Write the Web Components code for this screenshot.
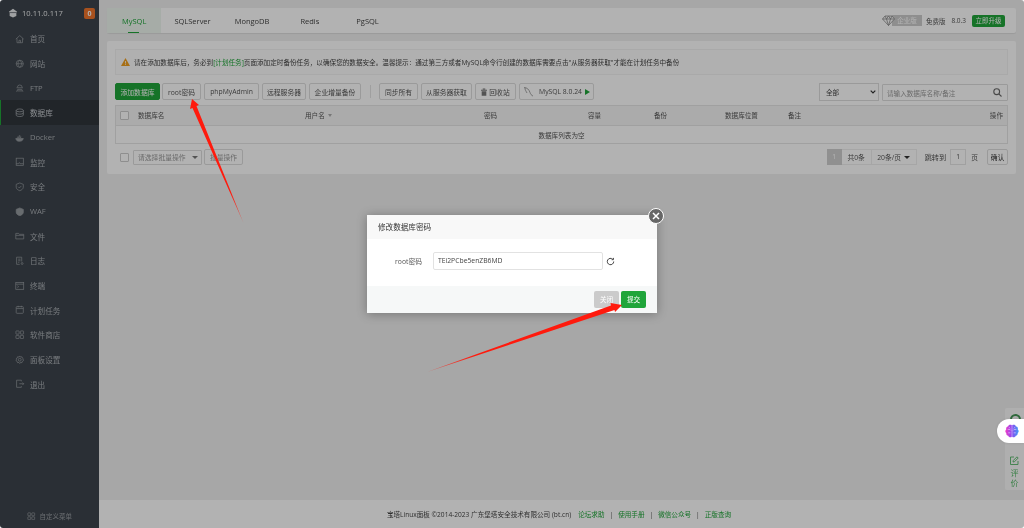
<!DOCTYPE html>
<html lang="zh">
<head>
<meta charset="utf-8">
<title>数据库</title>
<style>
  html, body { margin: 0; padding: 0; width: 1024px; height: 528px; overflow: hidden; background: #fff; }
  body { font-family: "Open Sans", "Noto Sans CJK SC", sans-serif; font-size: 6.6px; color: #555; }
</style>
</head>
<body>
<bt-app></bt-app>
<script>
const FONT = `"Open Sans", "Noto Sans CJK SC", sans-serif`;

const ICONS = {
  home: '<path d="M1 6.500 6 2l5 4.500M2.500 5.500V11h7V5.500M5 11V8h2v3"/>',
  globe: '<circle cx="6" cy="6" r="4.500"/><path d="M1.500 6h9M6 1.500c-3 3-3 6 0 9M6 1.500c3 3 3 6 0 9"/>',
  ftp: '<path d="M3 5.500a3 3 0 0 1 6 0M2 6h8M3.500 8h5M2 11l1.500-3M10 11 8.500 8M3 10h6"/>',
  db: '<ellipse cx="6" cy="3" rx="4.500" ry="1.800"/><path d="M1.500 3v6c0 1 2 1.800 4.500 1.800S10.500 10 10.500 9V3M1.500 6c0 1 2 1.800 4.500 1.800S10.500 7 10.500 6"/>',
  docker: '<path d="M1 7h9.500c-.5 2.500-2.500 3.500-5 3.500C3 10.500 1.500 9.500 1 7z" fill="currentColor"/><path d="M3 6V5h1.500v1M5 6V5h1.500v1M5 4.500V3.500h1.500v1M7 6V5h1" fill="none"/>',
  monitor: '<rect x="1.500" y="1.500" width="9" height="9"/><path d="M1.500 8.500h3l1-1.500 1 1.500h4"/>',
  shield: '<path d="M6 1.200 10.500 3v3.500c0 2-2 3.700-4.500 4.500-2.500-.8-4.500-2.500-4.500-4.500V3z"/><path d="m4 6 1.500 1.500L8 5"/>',
  waf: '<path d="M6 1.200 10.500 3v3.500c0 2-2 3.700-4.500 4.500-2.500-.8-4.500-2.500-4.500-4.500V3z" fill="currentColor"/>',
  folder: '<path d="M1 3h3.500l1 1.200H11V10H1zM1 5.500h10"/>',
  log: '<path d="M8.500 7V1.500h-6.500v9H6M4 4h3M4 6h3M4 8h1.500"/><circle cx="9" cy="9.500" r="1.200"/>',
  term: '<rect x="1" y="2" width="10" height="8.500"/><path d="M1 4h10M3 6l1.500 1.200L3 8.500"/>',
  cron: '<rect x="1.500" y="2" width="9" height="8.500" rx="1"/><path d="M1.500 4.500h9M4 1v2M8 1v2"/>',
  store: '<rect x="1.200" y="1.200" width="4" height="4" rx=".5"/><rect x="6.800" y="1.200" width="4" height="4" rx=".5"/><rect x="1.200" y="6.800" width="4" height="4" rx=".5"/><rect x="6.800" y="6.800" width="4" height="4" rx=".5"/>',
  gear: '<circle cx="6" cy="6" r="1.800"/><path d="M6 1.200 7 2.600l1.800-.3.500 1.700 1.500 1L10 6l.8 1-1.500 1-.5 1.700L7 9.400 6 10.800 5 9.400l-1.800.3L2.700 8l-1.500-1L2 6l-.8-1 1.500-1 .5-1.700L5 2.600z"/>',
  exit: '<path d="M8 3V1.500H2v9h6V9M5.500 6H11M9.500 4.500 11 6 9.500 7.500"/>'
};

function comp(tag, build) {
  customElements.define(tag, class extends HTMLElement {
    connectedCallback() {
      if (this.shadowRoot) return;
      this.attachShadow({ mode: 'open' });
      this.shadowRoot.innerHTML = build(this);
    }
  });
}

comp('bt-nav-item', el => `
  <style>
    :host { display: flex; align-items: center; height: 24.67px; padding-left: 15px; gap: 5.500px; color: #acb1b6; font-size: 7.600px; box-sizing: border-box; }
    :host([active]) { background: #30363c; box-shadow: inset 1px 0 #20a53a; color: #c8ccd0; }
    svg { width: 9.500px; height: 9.500px; fill: none; stroke: currentColor; stroke-width: .9; flex: none; opacity: .8; }
  </style>
  <svg viewBox="0 0 12 12">${ICONS[el.getAttribute('icon')]}</svg><slot></slot>`);

comp('bt-sidebar', () => `
  <style>
    :host { display: flex; flex-direction: column; width: 99px; flex: none; background: #3d444c; font-family: ${FONT}; }
    .head { display: flex; align-items: center; height: 26.500px; padding: 0 4px 0 8px; color: #e8eaec; font-size: 7.600px; box-sizing: border-box; }
    .head svg { width: 10px; height: 10px; margin-right: 4px; }
    .head span { flex: 1; }
    .badge { flex: none; width: 11px; height: 11px; background: #f0752c; color: #fff; border-radius: 2px; font-size: 7px; font-weight: 700; line-height: 11px; text-align: center; }
    .foot { margin-top: auto; height: 24px; display: flex; align-items: center; padding-left: 27px; gap: 4px; color: #9a9fa4; font-size: 6.500px; }
    .foot svg { width: 8.500px; height: 8.500px; fill: none; stroke: currentColor; stroke-width: .9; }
  </style>
  <div class="head">
    <svg viewBox="0 0 12 12"><path d="M1 4.500 6 1l5 3.500-1 .8v4.200L6 11.500 2 9.500V5.300z" fill="#e6e8ea"/><path d="M2 5.500h8" stroke="#3d444c" stroke-width=".8"/></svg>
    <span>10.11.0.117</span><b class="badge">0</b>
  </div>
  <nav><slot></slot></nav>
  <div class="foot"><svg viewBox="0 0 12 12">${ICONS.store}</svg>自定义菜单</div>`);

comp('bt-tabs', () => `
  <style>
    :host { display: flex; align-items: center; height: 25px; background: #fff; border-radius: 2px; box-shadow: 0 1px 1px rgba(0,0,0,.08); font-family: ${FONT}; font-size: 7.500px; color: #444; flex: none; }
    .t { height: 100%; display: flex; align-items: center; padding: 0 15px; position: relative; }
    .on { background: #eef7f0; color: #20a53a; }
    .on::after { content: ""; position: absolute; left: 21px; width: 11px; bottom: 0; height: 1px; background: #20a53a; }
    .tabs { display: flex; height: 100%; }
    .right { margin-left: auto; display: flex; align-items: center; font-size: 6.500px; color: #555; padding-right: 11px; }
    .ver { display: flex; align-items: center; margin-right: 4px; }
    .ver svg { width: 13px; height: 11px; margin-right: -3px; position: relative; }
    .ver b { background: #ccc; color: #fff; font-weight: 400; height: 11px; width: 30px; text-align: center; line-height: 11px; font-size: 6.500px; }
    .num { margin: 0 6px; }
    .up { background: #20a53a; color: #fff; border-radius: 2px; width: 33px; height: 12px; line-height: 12px; text-align: center; }
  </style>
  <div class="tabs">
    <div class="t on">MySQL</div><div class="t" style="padding:0 13px">SQLServer</div><div class="t" style="padding:0 11px">MongoDB</div><div class="t" style="padding:0 20px">Redis</div><div class="t" style="padding:0 17px">PgSQL</div>
  </div>
  <div class="right">
    <div class="ver"><svg viewBox="0 0 13 11" fill="#fff" stroke="#888" stroke-width=".8"><path d="M3 1h7l2.500 3L6.500 10.500.5 4zM.5 4h12M4.500 4l2 6.500 2-6.500M3 1l1.500 3L6.500 1l2 3L10 1"/></svg><b>企业版</b></div>
    <span>免费版</span><span class="num">8.0.3</span><span class="up">立即升级</span>
  </div>`);

comp('bt-btn', () => `
  <style>
    :host { display: inline-flex; align-items: center; justify-content: center; box-sizing: border-box; height: 17px; border: 1px solid #ddd; border-radius: 2px; background: #fff; color: #555; font-size: 6.800px; white-space: nowrap; flex: none; gap: 2px; }
    :host([primary]) { background: #20a53a; border-color: #20a53a; color: #fff; }
  </style><slot></slot>`);

comp('bt-check', () => `
  <style>:host { display: block; width: 9px; height: 9px; box-sizing: border-box; border: 1px solid #ccc; background: #fff; border-radius: 1px; flex: none; }</style>`);

comp('bt-toolbar', () => `
  <style>
    :host { display: flex; align-items: flex-start; height: 18px; margin-top: 8px; }
    .sep { width: 1px; height: 13px; background: #e4e4e4; margin: 2px 8px 0 9px; flex: none; }
    .sel { width: 60px; height: 18px; margin-left: auto; box-sizing: border-box; border: 1px solid #ddd; display: flex; align-items: center; justify-content: space-between; padding: 0 2px 0 6px; color: #444; font-size: 6.600px; }
    .search { width: 126px; height: 17px; margin: 1px 0 0 3px; box-sizing: border-box; border: 1px solid #ddd; border-radius: 1px; display: flex; align-items: center; justify-content: space-between; padding: 0 5px 0 4px; color: #999; font-size: 6.600px; }
    svg { display: block; }
    .ic { fill: none; stroke: #666; }
  </style>
  <bt-btn primary style="width:45px">添加数据库</bt-btn>
  <bt-btn style="width:39px;margin-left:2px">root密码</bt-btn>
  <bt-btn style="width:55px;margin-left:3px">phpMyAdmin</bt-btn>
  <bt-btn style="width:44px;margin-left:3px">远程服务器</bt-btn>
  <bt-btn style="width:52px;margin-left:3px">企业增量备份</bt-btn>
  <div class="sep"></div>
  <bt-btn style="width:39px">同步所有</bt-btn>
  <bt-btn style="width:51px;margin-left:3px">从服务器获取</bt-btn>
  <bt-btn style="width:41px;margin-left:3px"><svg width="6" height="8" viewBox="0 0 7 9"><path d="M0 2h7v1H0zM2 .5h3v1H2zM.8 3.500h5.400V9H.8z" fill="#777"/></svg> 回收站</bt-btn>
  <bt-btn style="width:75px;margin-left:3px"><svg class="ic" width="11" height="11" viewBox="0 0 11 11" stroke-width=".6"><path d="M1 1.500c3 0 5 2 6 5 .5 1.500 1.500 3 3 3.500M2 2c0 2 1 3 2 5"/></svg><span style="margin:0 1px 0 3px">MySQL 8.0.24</span><svg width="5" height="6" viewBox="0 0 5 6"><path d="M0 0l5 3-5 3z" fill="#20a53a"/></svg></bt-btn>
  <div class="sel">全部<svg width="6" height="4" viewBox="0 0 6 4"><path d="m.7.7 2.300 2.300L5.300.7" fill="none" stroke="#333" stroke-width="1.200"/></svg></div>
  <div class="search">请输入数据库名称/备注<svg class="ic" width="9" height="9" viewBox="0 0 9 9" stroke-width="1.100"><circle cx="3.700" cy="3.700" r="2.900"/><path d="m5.800 5.800 2.700 2.700"/></svg></div>`);

comp('bt-table', () => `
  <style>
    :host { display: block; margin-top: 4px; border: 1px solid #e6e6e6; box-sizing: border-box; height: 39px; font-size: 6.600px; color: #555; }
    .h { display: grid; grid-template-columns: 22px 167px 179px 104px 66px 71px 63px 1fr auto; align-items: center; height: 19px; background: #f5f5f5; border-bottom: 1px solid #e6e6e6; padding-right: 4px; }
    .h span { position: relative; top: -.5px; }
    .h bt-check { margin-left: 4px; }
    .e { height: 17px; display: flex; align-items: center; justify-content: center; }
    .u { display: flex; align-items: center; gap: 3px; }
    .u::after { content: ""; border: 2.500px solid transparent; border-top: 3px solid #aaa; border-bottom: 0; }
  </style>
  <div class="h"><bt-check></bt-check><span>数据库名</span><span class="u">用户名</span><span>密码</span><span>容量</span><span>备份</span><span>数据库位置</span><span>备注</span><span>操作</span></div>
  <div class="e">数据库列表为空</div>`);

comp('bt-pager', () => `
  <style>
    :host { display: flex; align-items: center; height: 16px; margin-top: 5px; font-size: 6.800px; color: #555; }
    .sel { display: flex; align-items: center; box-sizing: border-box; height: 15px; border: 1px solid #ddd; border-radius: 1px; color: #999; width: 69px; margin-left: 4px; padding: 0 3px 0 4px; justify-content: space-between; }
    .tri { width: 0; height: 0; border: 3px solid transparent; border-top: 3.500px solid #777; border-bottom: 0; }
    .pg { margin-left: auto; display: flex; align-items: center; height: 16px; }
    .cur { width: 15px; height: 16px; line-height: 16px; text-align: center; background: #cfcfcf; color: #fff; }
    .cell { display: flex; align-items: center; justify-content: center; box-sizing: border-box; height: 16px; border: 1px solid #eee; border-left: 0; }
    .inp { width: 16px; height: 16px; line-height: 14px; box-sizing: border-box; border: 1px solid #e6e6e6; text-align: center; margin: 0 5px 0 4px; }
  </style>
  <bt-check style="margin-left:5px"></bt-check>
  <div class="sel">请选择批量操作<i class="tri"></i></div>
  <bt-btn style="width:39px;height:16px;margin-left:2px;color:#999">批量操作</bt-btn>
  <div class="pg">
    <div class="cur">1</div>
    <div class="cell" style="width:30px">共0条</div>
    <div class="cell" style="width:45px;gap:3px">20条/页<i class="tri" style="border-top-color:#333"></i></div>
    <span style="margin-left:8px;font-size:7.200px">跳转到</span>
    <div class="inp">1</div>
    <span>页</span>
    <bt-btn style="width:21px;height:16px;margin-left:9px;color:#333">确认</bt-btn>
  </div>`);

comp('bt-panel', () => `
  <style>
    :host { display: block; box-sizing: border-box; height: 133px; background: #fff; border-radius: 2px; padding: 8px; margin-top: 8px; flex: none; font-family: ${FONT}; }
    .alert { height: 26px; box-sizing: border-box; border: 1px solid #f3f3f3; background: #fcfcfc; display: flex; align-items: center; padding-left: 5px; gap: 4px; font-size: 6.600px; color: #444; white-space: nowrap; }
    .alert a { color: #20a53a; }
  </style>
  <div class="alert">
    <svg width="9" height="8" viewBox="0 0 9 8"><path d="M4.500 0 9 8H0z" fill="#f0a020"/><path d="M4.500 3v2.500M4.500 6.200V7" stroke="#fff" stroke-width=".8"/></svg>
    <span>请在添加数据库后，务必到<a>[计划任务]</a>页面添加定时备份任务，以确保您的数据安全。温馨提示：通过第三方或者MySQL命令行创建的数据库需要点击"从服务器获取"才能在计划任务中备份</span>
  </div>
  <bt-toolbar></bt-toolbar>
  <bt-table></bt-table>
  <bt-pager></bt-pager>`);

comp('bt-footer', () => `
  <style>
    :host { display: flex; align-items: center; justify-content: center; height: 28px; margin-top: auto; background: #fff; font-family: ${FONT}; font-size: 6.600px; color: #444; flex: none; padding-right: 5px; white-space: nowrap; }
    a { color: #20a53a; } i { font-style: normal; margin: 0 5px; color: #555; }
  </style>
  <span>宝塔Linux面板 ©2014-2023 广东堡塔安全技术有限公司 (bt.cn)</span>
  <a style="margin-left:7px">论坛求助</a><i>|</i><a>使用手册</a><i>|</i><a>微信公众号</a><i>|</i><a>正版查询</a>`);

comp('bt-widget', () => `
  <style>
    :host { position: absolute; right: 0; top: 408px; width: 19px; height: 82px; background: #fff; border-radius: 2px 0 0 2px; color: #20a53a; font: 8px/10px ${FONT}; text-align: center; opacity: .75; }
    .top { position: absolute; left: 5px; top: 6px; width: 7px; height: 7px; border: 2px solid #0c7a24; border-radius: 50%; }
    .e { position: absolute; left: 5px; top: 48px; }
    .w { position: absolute; left: 0; right: 0; top: 60px; }
  </style>
  <div class="top"></div>
  <svg class="e" width="9" height="9" viewBox="0 0 9 9" fill="none" stroke="#20a53a" stroke-width=".9"><path d="M8 5v3.500H.5V1H4M3 6l.3-1.500L7 .8 8.200 2 4.500 5.700z"/></svg>
  <div class="w">评<br>价</div>`);

comp('bt-brain', () => `
  <style>
    :host { position: absolute; right: 0; top: 419px; width: 27px; height: 24px; background: #fff; border-radius: 12px 0 0 12px; display: flex; align-items: center; padding-left: 8px; box-sizing: border-box; box-shadow: 0 0 3px rgba(0,0,0,.1); }
  </style>
  <svg width="14" height="14" viewBox="0 0 13 13">
    <defs><linearGradient id="g" x1="0" y1="0" x2="1" y2="0"><stop offset="0" stop-color="#f03ac8"/><stop offset=".5" stop-color="#8a4cf0"/><stop offset="1" stop-color="#3f9cf5"/></linearGradient></defs>
    <path d="M6.300 1C4.600.2 3.200.8 3 2 1.300 2.300.7 3.700 1.200 4.800 0 5.800 0 7.600 1.200 8.300.9 9.700 1.900 10.800 3 10.900c.3 1.400 2.300 1.800 3.300.9V1zM6.700 1C8.400.2 9.800.8 10 2c1.700.3 2.300 1.700 1.800 2.800 1.200 1 1.200 2.800 0 3.500.3 1.400-.7 2.500-1.800 2.600-.3 1.400-2.300 1.800-3.300.9V1z" fill="url(#g)"/>
    <path d="M2.500 5h2l1 1M3 8.200h2M10.500 5h-2l-1 1M10 8.200H8M3.800 3l1 1M9.200 3l-1 1" stroke="#fff" stroke-width=".45" fill="none"/>
  </svg>`);

comp('bt-modal', () => `
  <style>
    :host { position: absolute; left: 367px; top: 215px; width: 290px; height: 98px; background: #fff; box-shadow: 0 1px 10px rgba(0,0,0,.3); display: flex; flex-direction: column; font-family: ${FONT}; font-size: 6.800px; color: #444; }
    .t { height: 24px; flex: none; background: #f8f8f8; display: flex; align-items: center; padding: 0 0 1px 11px; box-sizing: border-box; color: #333; font-size: 7.600px; }
    .b { flex: 1; display: flex; align-items: center; padding-bottom: 3px; }
    .l { width: 55px; text-align: right; margin-right: 11px; color: #555; }
    .i { width: 170px; height: 18px; box-sizing: border-box; border: 1px solid #e2e2e2; border-radius: 2px; line-height: 16px; padding-left: 4px; color: #444; }
    .b svg { margin-left: 3px; }
    .f { height: 27px; flex: none; background: #f6f8f8; display: flex; align-items: center; justify-content: flex-end; padding-right: 11px; gap: 2px; }
    .f span { width: 25px; height: 17px; line-height: 17px; text-align: center; color: #fff; border-radius: 2px; font-size: 6.600px; }
    .x { position: absolute; left: 281px; top: -7px; width: 14px; height: 14px; border-radius: 50%; background: #666; border: 1.500px solid #fff; display: flex; align-items: center; justify-content: center; }
  </style>
  <div class="t">修改数据库密码</div>
  <div class="b"><span class="l">root密码</span><div class="i">TEi2PCbe5enZB6MD</div>
    <svg width="9" height="9" viewBox="0 0 9 9" fill="none" stroke="#444" stroke-width="1"><path d="M7.700 4.500a3.200 3.200 0 1 1-1-2.300M7.400.9v1.800H5.600"/></svg>
  </div>
  <div class="f"><span style="background:#cbcbcb">关闭</span><span style="background:#20a53a">提交</span></div>
  <div class="x"><svg width="8" height="8" viewBox="0 0 8 8" stroke="#fff" stroke-width="1.500"><path d="m1 1 6 6M7 1 1 7"/></svg></div>`);

comp('bt-arrows', () => `
  <style>:host { position: absolute; inset: 0; pointer-events: none; } svg { display: block; }</style>
  <svg width="1024" height="528" viewBox="0 0 1024 528">
    <defs>
      <linearGradient id="a1" gradientUnits="userSpaceOnUse" x1="192" y1="100" x2="243" y2="222"><stop offset=".75" stop-color="#ff1a0d"/><stop offset="1" stop-color="#ff1a0d" stop-opacity=".5"/></linearGradient>
      <linearGradient id="a2" gradientUnits="userSpaceOnUse" x1="621" y1="305" x2="427" y2="372"><stop offset=".75" stop-color="#ff1a0d"/><stop offset="1" stop-color="#ff1a0d" stop-opacity=".5"/></linearGradient>
    </defs>
    <path d="M192 99 199 105 196.500 106 243.500 223 192.500 108 190 109z" fill="url(#a1)"/>
    <path d="M622 305 615 312 614.500 310 427 372 611 305.500 610.500 303z" fill="url(#a2)"/>
  </svg>`);

comp('bt-app', () => `
  <style>
    :host { display: block; position: relative; width: 1024px; height: 528px; overflow: hidden; border-radius: 3px; }
    .stage { position: absolute; inset: 0; filter: blur(.25px); overflow: hidden; }
    .app { display: flex; height: 100%; background: #f0f0f0; }
    main { flex: 1; min-width: 0; display: flex; flex-direction: column; padding-top: 8px; }
    .wrap { padding: 0 8px; display: flex; flex-direction: column; }
    .shade { position: absolute; inset: 0; background: rgba(0,0,0,.3); }
  </style>
  <div class="stage">
    <div class="app">
      <bt-sidebar>
        <bt-nav-item icon="home">首页</bt-nav-item>
        <bt-nav-item icon="globe">网站</bt-nav-item>
        <bt-nav-item icon="ftp">FTP</bt-nav-item>
        <bt-nav-item icon="db" active>数据库</bt-nav-item>
        <bt-nav-item icon="docker">Docker</bt-nav-item>
        <bt-nav-item icon="monitor">监控</bt-nav-item>
        <bt-nav-item icon="shield">安全</bt-nav-item>
        <bt-nav-item icon="waf">WAF</bt-nav-item>
        <bt-nav-item icon="folder">文件</bt-nav-item>
        <bt-nav-item icon="log">日志</bt-nav-item>
        <bt-nav-item icon="term">终端</bt-nav-item>
        <bt-nav-item icon="cron">计划任务</bt-nav-item>
        <bt-nav-item icon="store">软件商店</bt-nav-item>
        <bt-nav-item icon="gear">面板设置</bt-nav-item>
        <bt-nav-item icon="exit">退出</bt-nav-item>
      </bt-sidebar>
      <main>
        <div class="wrap"><bt-tabs></bt-tabs><bt-panel></bt-panel></div>
        <bt-footer></bt-footer>
      </main>
    </div>
    <bt-widget></bt-widget>
    <div class="shade"></div>
    <bt-brain></bt-brain>
    <bt-modal></bt-modal>
    <bt-arrows></bt-arrows>
  </div>`);
</script>
</body>
</html>
